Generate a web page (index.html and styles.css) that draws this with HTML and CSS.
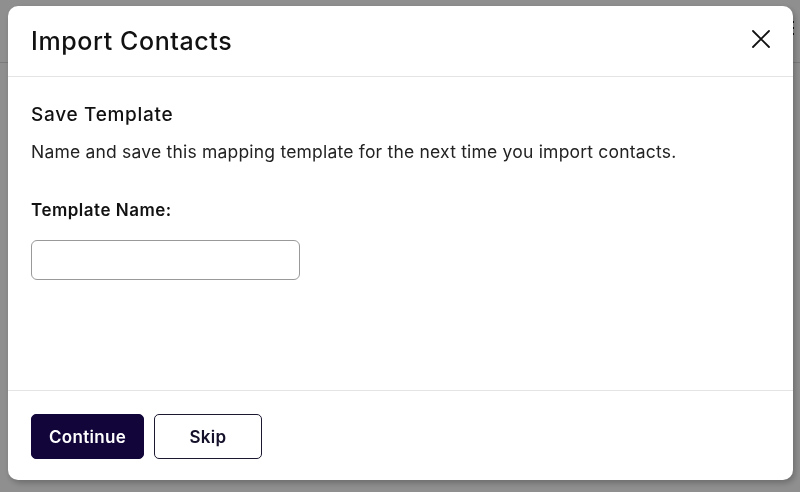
FILE: index.html
```html
<!DOCTYPE html>
<html lang="en">
<head>
  <meta charset="UTF-8" />
  <title>Import Contacts</title>
  <link rel="stylesheet" href="styles.css">
</head>
<body>
  <div class="page">
    <div class="topbar">
      <span class="kebab"><i></i><i></i><i></i></span>
    </div>
  </div>

  <div class="overlay">
    <div class="modal">
      <div class="modal-header">
        <h1>Import Contacts</h1>
        <button class="close" aria-label="Close">
          <svg width="20" height="20" viewBox="0 0 20 20">
            <path d="M2 2 L18 18 M18 2 L2 18" stroke="#111" stroke-width="1.8" stroke-linecap="round" fill="none" />
          </svg>
        </button>
      </div>

      <div class="modal-body">
        <h2>Save Template</h2>
        <p class="desc">Name and save this mapping template for the next time you import contacts.</p>
        <label for="tpl-name">Template Name:</label>
        <input type="text" id="tpl-name" />
      </div>

      <div class="modal-footer">
        <button class="btn primary">Continue</button>
        <button class="btn secondary">Skip</button>
      </div>
    </div>
  </div>
</body>
</html>
```

FILE: styles.css
```css
* {
  box-sizing: border-box;
}
body {
  margin: 0;
  height: 100vh;
  font-family: Inter, "Noto Sans", sans-serif;
  color: #111;
  background: #fff;
  overflow: hidden;
}
.page {
  height: 100%;
}
.topbar {
  height: 63px;
  border-bottom: 1px solid #dcdcdc;
  display: flex;
  justify-content: flex-end;
  align-items: center;
  padding-right: 6px;
}
.kebab {
  display: flex;
  flex-direction: column;
  gap: 4px;
  margin-top: -6px;
}
.kebab i {
  width: 2px;
  height: 2px;
  background: #222;
}
.overlay {
  position: fixed;
  inset: 0;
  background: rgba(0, 0, 0, 0.44);
  padding: 6px 7px 12px 8px;
}
.modal {
  background: #fff;
  height: 100%;
  border-radius: 10px;
  box-shadow: 2px 3px 6px rgba(0, 0, 0, 0.25);
  display: flex;
  flex-direction: column;
}
.modal-header {
  height: 71px;
  border-bottom: 1px solid #e4e4e4;
  display: flex;
  align-items: center;
  justify-content: space-between;
  padding: 0 22px 0 23px;
}
.modal-header h1 {
  margin: 0;
  font-size: 25px;
  font-weight: 500;
  letter-spacing: 0.6px;
}
.close {
  background: none;
  border: none;
  padding: 0;
  cursor: pointer;
  display: flex;
  margin-top: -4px;
}
.modal-body {
  flex: 1;
  padding: 26px 23px;
  border-bottom: 1px solid #e4e4e4;
}
.modal-body h2 {
  margin: 0;
  font-size: 19px;
  font-weight: 500;
  line-height: 24px;
  letter-spacing: 0.7px;
}
.desc {
  margin: 14px 0 0;
  font-size: 17.5px;
  line-height: 22px;
  letter-spacing: 0.2px;
  color: #222;
}
label {
  display: block;
  margin-top: 37px;
  font-size: 17px;
  font-weight: 600;
  line-height: 20px;
  letter-spacing: 0.5px;
}
input {
  display: block;
  margin-top: 20px;
  width: 269px;
  height: 40px;
  border: 1px solid #999;
  border-radius: 6px;
  font-size: 16px;
  padding: 0 10px;
}
.modal-footer {
  padding: 23px 23px 21px;
  display: flex;
  gap: 10px;
}
.btn {
  height: 45px;
  border-radius: 5px;
  font-family: inherit;
  font-size: 17px;
  font-weight: 600;
  letter-spacing: 0.3px;
  cursor: pointer;
}
.primary {
  width: 113px;
  background: #12053a;
  color: #fff;
  border: 1px solid #12053a;
}
.secondary {
  width: 108px;
  background: #fff;
  color: #14102a;
  border: 1px solid #1c1830;
}
```
